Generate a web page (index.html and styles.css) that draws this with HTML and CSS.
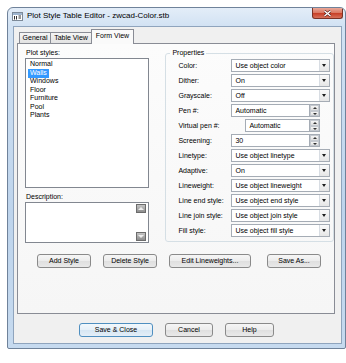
FILE: index.html
```html
<!DOCTYPE html>
<html lang="en">
<head>
    <meta charset="UTF-8">
    <title>Plot Style Table Editor</title>
    <link rel="stylesheet" href="styles.css">
</head>
<body>
    <div class="window">
        <div class="titlebar">
            <svg class="app-icon" width="11" height="9" viewBox="0 0 11 9">
                <rect x="0.5" y="0.5" width="10" height="8" fill="#fff" stroke="#7d8a99"/>
                <rect x="1" y="1" width="9" height="2" fill="#9fb6d0"/>
                <path d="M2.5 4v3.5M4.5 4v3.5M6.5 4h2.5M6.5 6h2.5" stroke="#333" stroke-width="1"/>
            </svg>
            <span class="title">Plot Style Table Editor - zwcad-Color.stb</span>
            <div class="close">
                <svg width="9" height="7" viewBox="0 0 9 7">
                    <path d="M1.5 1l6 5M7.5 1l-6 5" stroke="#5a1c14" stroke-width="2.6"/>
                    <path d="M1.5 1l6 5M7.5 1l-6 5" stroke="#fff" stroke-width="1.4"/>
                </svg>
            </div>
        </div>

        <div class="client">
            <div class="tabs">
                <div class="tab tab-general">General</div>
                <div class="tab tab-table">Table View</div>
                <div class="tab tab-form active">Form View</div>
            </div>

            <div class="panel">
                <div class="panel-body">
                    <div class="left-col">
                        <div class="label">Plot styles:</div>
                        <ul class="list">
                            <li><span>Normal</span></li>
                            <li><span class="selected">Walls</span></li>
                            <li><span>Windows</span></li>
                            <li><span>Floor</span></li>
                            <li><span>Furniture</span></li>
                            <li><span>Pool</span></li>
                            <li><span>Plants</span></li>
                        </ul>
                        <div class="label label-desc">Description:</div>
                        <div class="desc">
                            <div class="desc-text"></div>
                            <div class="vscroll">
                                <div class="sb-btn"><span class="tri-up"></span></div>
                                <div class="sb-btn"><span class="tri-down"></span></div>
                            </div>
                        </div>
                    </div>

                    <fieldset class="props">
                        <legend>Properties</legend>
                        <div class="row">
                            <span class="row-label">Color:</span>
                            <div class="combo"><span class="value">Use object color</span><span class="arrow"></span></div>
                        </div>
                        <div class="row">
                            <span class="row-label">Dither:</span>
                            <div class="combo"><span class="value">On</span><span class="arrow"></span></div>
                        </div>
                        <div class="row">
                            <span class="row-label">Grayscale:</span>
                            <div class="combo"><span class="value">Off</span><span class="arrow"></span></div>
                        </div>
                        <div class="row">
                            <span class="row-label">Pen #:</span>
                            <div class="spin"><span class="value">Automatic</span><span class="spin-btns"><i class="up"></i><i class="down"></i></span></div>
                        </div>
                        <div class="row">
                            <span class="row-label wide">Virtual pen #:</span>
                            <div class="spin short"><span class="value">Automatic</span><span class="spin-btns"><i class="up"></i><i class="down"></i></span></div>
                        </div>
                        <div class="row">
                            <span class="row-label">Screening:</span>
                            <div class="spin"><span class="value">30</span><span class="spin-btns"><i class="up"></i><i class="down"></i></span></div>
                        </div>
                        <div class="row">
                            <span class="row-label">Linetype:</span>
                            <div class="combo"><span class="value">Use object linetype</span><span class="arrow"></span></div>
                        </div>
                        <div class="row">
                            <span class="row-label">Adaptive:</span>
                            <div class="combo"><span class="value">On</span><span class="arrow"></span></div>
                        </div>
                        <div class="row">
                            <span class="row-label">Lineweight:</span>
                            <div class="combo"><span class="value">Use object lineweight</span><span class="arrow"></span></div>
                        </div>
                        <div class="row">
                            <span class="row-label">Line end style:</span>
                            <div class="combo"><span class="value">Use object end style</span><span class="arrow"></span></div>
                        </div>
                        <div class="row">
                            <span class="row-label">Line join style:</span>
                            <div class="combo"><span class="value">Use object join style</span><span class="arrow"></span></div>
                        </div>
                        <div class="row">
                            <span class="row-label">Fill style:</span>
                            <div class="combo"><span class="value">Use object fill style</span><span class="arrow"></span></div>
                        </div>
                    </fieldset>
                </div>

                <div class="btn-row">
                    <button class="btn w54">Add Style</button>
                    <button class="btn w54">Delete Style</button>
                    <button class="btn w82">Edit Lineweights...</button>
                    <button class="btn w54 save-as">Save As...</button>
                </div>
            </div>

            <div class="dlg-buttons">
                <button class="btn default w74">Save &amp; Close</button>
                <button class="btn w48">Cancel</button>
                <button class="btn w49">Help</button>
            </div>
        </div>
    </div>
</body>
</html>
```

FILE: styles.css
```css
* {
    box-sizing: border-box;
}

body {
    margin: 0;
    background: #fff;
    font-family: "Liberation Sans", Arial, sans-serif;
    font-size: 7px;
    color: #000;
}

.window {
    margin: 7px 0 0 7px;
    width: 339px;
    height: 342px;
    border: 1px solid #6f829a;
    border-radius: 6px 6px 2px 2px;
    background: linear-gradient(to bottom, #e3edf8 0, #d2e2f3 18px, #bed4ec 60%, #c6daef 100%);
    display: flex;
    flex-direction: column;
    overflow: hidden;
}

.titlebar {
    height: 18px;
    display: flex;
    align-items: flex-start;
}

.app-icon {
    margin: 4px 0 0 4px;
}

.title {
    margin: 3px 0 0 4px;
    font-size: 8px;
    line-height: 10px;
    color: #000;
}

.close {
    margin-left: auto;
    margin-right: 2px;
    width: 31px;
    height: 11px;
    border: 1px solid #7a3226;
    border-top: none;
    border-radius: 0 0 3px 3px;
    background: linear-gradient(to bottom, #e9a899 0, #dc7b66 45%, #c84129 55%, #d8705a 100%);
    display: flex;
    align-items: center;
    justify-content: center;
}

.client {
    margin: 0 3px 0 5px;
    height: 318px;
    border: 1px solid #8fa4bd;
    background: #f0f0f0;
    padding: 0 6px 0 3px;
}

/* tabs */

.tabs {
    display: flex;
    align-items: flex-end;
    height: 16px;
    padding-left: 2px;
    position: relative;
    z-index: 1;
}

.tab {
    height: 11px;
    border: 1px solid #898c95;
    border-bottom: none;
    line-height: 9px;
    text-align: center;
    background: linear-gradient(to bottom, #f5f5f5, #e2e2e2);
    margin-right: -1px;
}

.tab-general {
    width: 32px;
}

.tab-table {
    width: 42px;
}

.tab-form {
    width: 43px;
}

.tab.active {
    height: 15px;
    line-height: 11px;
    background: #fafafa;
    margin-bottom: -1px;
}

.panel {
    width: 318px;
    height: 271px;
    border: 1px solid #898c95;
    background: linear-gradient(to bottom, #fcfcfc, #f6f6f6);
    overflow: hidden;
}

.panel-body {
    display: flex;
    padding: 5px 0 0 7px;
}

.left-col {
    width: 127px;
}

.label {
    line-height: 8px;
    height: 8px;
    padding-left: 1px;
    margin-bottom: 1px;
}

.label-desc {
    margin-top: 5px;
}

.list {
    list-style: none;
    margin: 0;
    padding: 1px 0 0 2px;
    height: 130px;
    border: 1px solid #828790;
    background: #fff;
}

.list li {
    height: 8.5px;
    line-height: 8.5px;
}

.list span {
    padding: 0 2px;
    display: inline-block;
    height: 9px;
}

.list .selected {
    background: #3399ff;
    color: #fff;
}

.desc {
    height: 41px;
    border: 1px solid #828790;
    background: #fff;
    display: flex;
}

.desc-text {
    flex: 1;
}

.vscroll {
    width: 13px;
    padding: 1px 2px 1px 0;
    display: flex;
    flex-direction: column;
    justify-content: space-between;
    align-items: flex-end;
}

.sb-btn {
    width: 10px;
    height: 9px;
    border: 1px solid #6c6c6c;
    background: linear-gradient(to bottom, #c4c4c4, #8d8d8d);
    display: flex;
    align-items: center;
    justify-content: center;
}

.tri-up,
.tri-down {
    width: 0;
    height: 0;
    border-left: 3px solid transparent;
    border-right: 3px solid transparent;
}

.tri-up {
    border-bottom: 3px solid #eee;
}

.tri-down {
    border-top: 3px solid #eee;
}

/* properties */

.props {
    margin: 0 0 0 16px;
    padding: 2px 0 0 0;
    width: 172px;
    height: 193px;
    border: 1px solid #d5dfe5;
    border-radius: 3px;
    min-width: 0;
}

.props legend {
    padding: 0 2px;
    margin-left: 4px;
    line-height: 8px;
    font-size: 7px;
}

.row {
    display: flex;
    align-items: center;
    height: 13px;
    margin: 0 0 2px 12px;
}

.row-label {
    width: 53px;
    flex: none;
}

.row-label.wide {
    width: 67px;
}

.combo,
.spin {
    height: 13px;
    border: 1px solid #a5acb5;
    background: #fff;
    display: flex;
    align-items: stretch;
}

.combo {
    width: 99px;
}

.spin {
    width: 89px;
}

.spin.short {
    width: 75px;
}

.value {
    flex: 1;
    line-height: 11px;
    padding-left: 3px;
    white-space: nowrap;
}

.arrow {
    width: 10px;
    border-left: 1px solid #d8dde3;
    background: linear-gradient(to bottom, #fafafa, #e6e6e6);
    position: relative;
}

.arrow::after {
    content: "";
    position: absolute;
    left: 2px;
    top: 4px;
    border-left: 2.5px solid transparent;
    border-right: 2.5px solid transparent;
    border-top: 3px solid #1e1e1e;
}

.spin-btns {
    width: 10px;
    border-left: 1px solid #a5acb5;
    display: flex;
    flex-direction: column;
}

.spin-btns i {
    flex: 1;
    background: linear-gradient(to bottom, #f6f6f6, #dedede);
    border: 1px solid #c5c9cf;
    position: relative;
}

.spin-btns i::after {
    content: "";
    position: absolute;
    left: 1.5px;
    border-left: 2.5px solid transparent;
    border-right: 2.5px solid transparent;
}

.spin-btns .up::after {
    top: 1px;
    border-bottom: 2px solid #333;
}

.spin-btns .down::after {
    top: 1px;
    border-top: 2px solid #333;
}

/* buttons */

.btn {
    height: 14px;
    padding: 0;
    border: 1px solid #8a8a8a;
    border-radius: 3px;
    background: linear-gradient(to bottom, #f6f6f6 0, #ececec 50%, #dfdfdf 51%, #e9e9e9 100%);
    font-family: "Liberation Sans", Arial, sans-serif;
    font-size: 7px;
    line-height: 12px;
    color: #000;
}

.btn.default {
    border-color: #4f8fc0;
    background: linear-gradient(to bottom, #f2f8fc 0, #e6f0f8 50%, #d6e6f3 51%, #e4eff8 100%);
}

.w48 {
    width: 48px;
}

.w49 {
    width: 49px;
}

.w54 {
    width: 54px;
}

.w74 {
    width: 74px;
}

.w82 {
    width: 82px;
}

.btn-row {
    display: flex;
    gap: 12px;
    margin-top: 11px;
    padding-left: 19px;
}

.save-as {
    margin-left: 4px;
}

.dlg-buttons {
    display: flex;
    gap: 12px;
    margin-top: 9px;
    padding-left: 62px;
}
```
